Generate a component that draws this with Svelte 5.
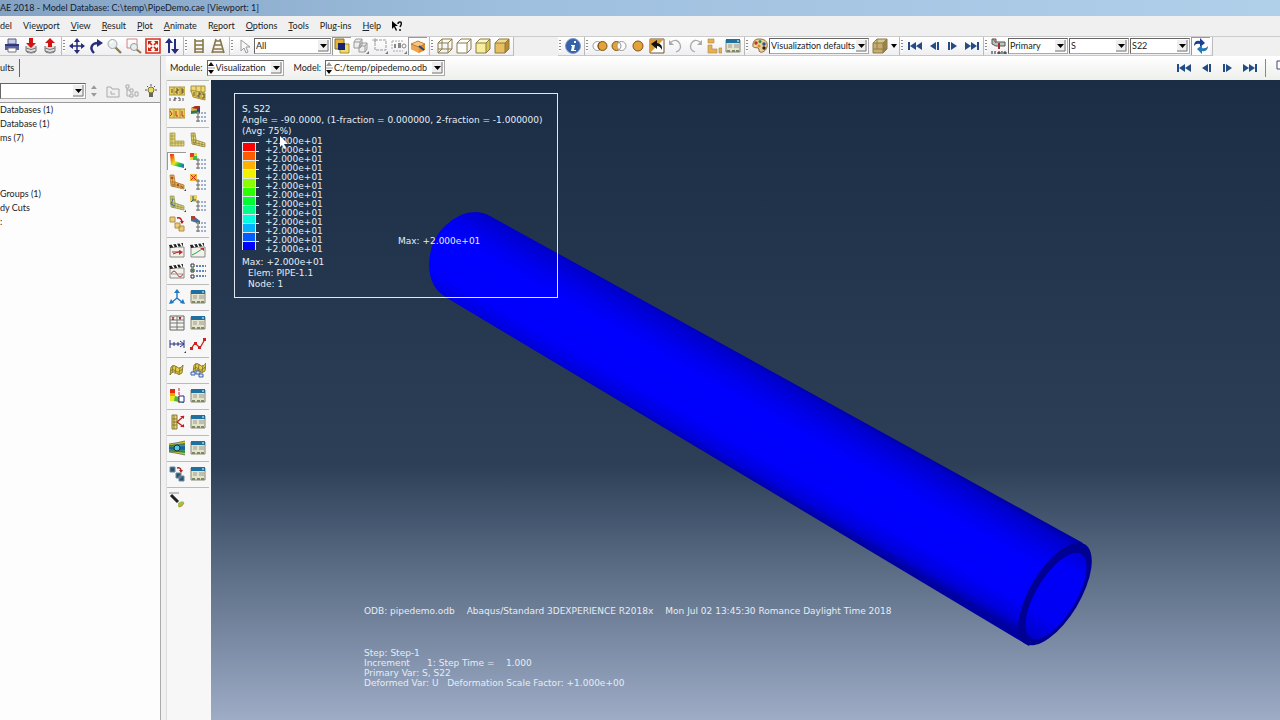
<script>
  const cube = (front, top, side) =>
    `<path d="M1 5h10v10H1z" fill="${front}"/><path d="M1 5l4-4h10l-4 4z" fill="${top}"/><path d="M11 5l4-4v10l-4 4z" fill="${side}"/><path d="M1 5h10v10H1zM1 5l4-4h10v10l-4 4M11 5l4-4" fill="none" stroke="#8a7a48"/>`;
  const table =
    '<path d="M1 2h14v12H1z" fill="#e6e3cc" stroke="#8a8872"/><path d="M1 1h14v4H1z" fill="#1f6f9f"/><path d="M2 12h3v2H2zM7 12h3v2H7zM11 12h3v2h-3z" fill="#7c8a68"/><path d="M3 7h4M9 7h5M3 9h4M9 9h5" stroke="#999"/><path d="M12 3h2" stroke="#fff"/>';
  const clap =
    '<path d="M1 5h14v10H1z" fill="#f2f2ec" stroke="#888"/><path d="M0 3l14-2v3L1 6z" fill="#222"/><path d="M3 2l2 3M7 1l2 4M11 1l2 3" stroke="#fff" stroke-width="1.4"/>';
  const list =
    '<path d="M7 6h2v2H7zM7 10h2v2H7zM7 14h2v2H7z" fill="#fff" stroke="#666"/><path d="M11 7h5M11 11h5M11 15h5" stroke="#456ca8" stroke-dasharray="2 1"/>';
  const elbow = (fill, line) =>
    `<path d="M1 1h4l1 7 9 3v4L2 12z" fill="${fill}"/><path d="M1 1h4l1 7 9 3v4L2 12zM3 1l1 12M1 4h4M1 8h5l-2 5M6 8v5M9 9v5M12 10v5M2 10l13 3" fill="none" stroke="${line}" stroke-width=".7"/>`;
  const rainbow =
    '<path d="M1 1h5v4H1z" fill="#e32a12"/><path d="M1 5h5v3H1z" fill="#f5a000"/><path d="M1 8h6v5H1z" fill="#e7e62a"/><path d="M6 8l4 1v5l-5-1z" fill="#3fc33a"/><path d="M10 9l5 1v5l-5-1z" fill="#169cc0"/>';
  const flag = '<path d="M2 5q3-3 6 0t6-2l-1 8q-3 3-6 0t-6 2z" fill="#e8cf4a" stroke="#8a7c34"/><path d="M7 4L6 12M1 9q3-3 6 0t6-2M4 3L3 11M11 5l-1 8" stroke="#8a7c34" fill="none"/>';

  const icons = {
    print: '<path d="M4 1h8v5H4z" fill="#c5ccec" stroke="#555a80"/><path d="M1 6h14v6H1z" fill="#5460a8"/><path d="M1 6h14v2H1z" fill="#33396f"/><path d="M4 10h8v4H4z" fill="#fff" stroke="#777"/>',
    save: '<ellipse cx="8" cy="13" rx="5" ry="2" fill="#ddd" stroke="#777"/><path d="M3 8v5q5 3 10 0V8" fill="#ddd" stroke="#777"/><path d="M3 10q5 3 10 0" fill="none" stroke="#777"/><path d="M6 0h4v5h3L8 10 3 5h3z" fill="#d51212"/>',
    load: '<ellipse cx="8" cy="13" rx="5" ry="2" fill="#ddd" stroke="#777"/><path d="M3 8v5q5 3 10 0V8" fill="#ddd" stroke="#777"/><path d="M3 10q5 3 10 0" fill="none" stroke="#777"/><path d="M6 9h4V5h3L8 0 3 5h3z" fill="#d51212"/>',
    pan: '<path d="M8 2v12M2 8h12" stroke="#252c7c" stroke-width="1.500"/><path d="M8 0l3 4H5zM8 16l3-4H5zM0 8l4-3v6zM16 8l-4-3v6z" fill="#252c7c"/>',
    rotate: '<path d="M6 15C1 10 4 5 10 5" fill="none" stroke="#252c7c" stroke-width="2.4"/><path d="M9 1l6 4-6 4z" fill="#252c7c"/>',
    zoom: '<path d="M8 9l6 6" stroke="#8f7c4a" stroke-width="2.4"/><circle cx="5.500" cy="6" r="4.500" fill="#e9eef0" stroke="#a2a8a8"/><path d="M3 5l3-2" stroke="#fff" stroke-width="2"/>',
    zoombox: '<path d="M1 1h10v9H1z" fill="none" stroke="#d78080"/><path d="M10 11l5 4" stroke="#8f7c4a" stroke-width="2.200"/><circle cx="8" cy="9" r="3.500" fill="#e9eef0" stroke="#999"/>',
    fit: '<path d="M1 1h14v14H1z" fill="#fff3ed" stroke="#dc3020" stroke-width="1.600"/><path d="M3 3h4L3 7zM13 3v4L9 3zM3 13V9l4 4zM13 13H9l4-4z" fill="#c92010"/><path d="M4 4l3 3M12 4L9 7M4 12l3-3M12 12L9 9" stroke="#c92010" stroke-width="1.600"/>',
    cycle: '<path d="M5 3v12M11 1v12" stroke="#252c7c" stroke-width="2"/><path d="M5 0l4 5H1zM11 16l4-5H7z" fill="#252c7c"/>',
    parallel: '<path d="M4 1v14M12 1v14M4 3h8M4 7h8M4 11h8M4 14h8" stroke="#877748" stroke-width="1.600"/>',
    perspective: '<path d="M6 1L2 15M10 1l4 14M5 3h6M5 7h6M4 11h9M2 14h12" stroke="#877748" stroke-width="1.600"/>',
    arrow: '<path d="M4 2v11l3-3 2 5 2-1-2-5h4z" fill="#f8f8f8" stroke="#999"/>',
    overlap: '<path d="M6 6h9v9H6z" fill="#f0dc70" stroke="#a8902c"/><path d="M1 1h9v10H1z" fill="#e0b53a" stroke="#8a6a20"/><path d="M4 5h7v7H4z" fill="#182375"/>',
    cubes: '<path d="M1 4h6v6H1zM1 4l2-3h6v6L7 10M7 4l2-3M6 8h6v6H6zM6 8l2-3h6v6l-2 3M12 8l2-3" fill="#eee" stroke="#999"/><path d="M16 13v3h-3z" fill="#777"/>',
    dashbox: '<path d="M3 2h11v10H3z" fill="none" stroke="#999" stroke-dasharray="3 1"/><path d="M0 2h5M3 0v5" stroke="#aaa"/><path d="M16 13v3h-3z" fill="#777"/>',
    shapes: '<path d="M1 3v9M1 3h12M2 13h10" fill="none" stroke="#aaa" stroke-dasharray="2 1"/><path d="M3 6h2v4H3zM7 5h3v5H7z" fill="#888"/><circle cx="13" cy="8" r="2" fill="none" stroke="#888"/><path d="M16 13v3h-3z" fill="#777"/>',
    box: '<path d="M1 6l7-3 7 3v6l-6 3-8-4z" fill="#e58c2b"/><path d="M1 6l8 3v6l-8-4z" fill="#f2a64c"/><path d="M1 6l7-3 7 3-6 3z" fill="#fac780" stroke="#9a5a18" stroke-width=".6"/><path d="M9 8l5 4" stroke="#234a80" stroke-width="2"/>',
    wire: cube('none', 'none', 'none') + '<path d="M5 1v10H1M5 11h10M5 11l-4 4" fill="none" stroke="#8b7d48"/>',
    hidden: cube('#fff', '#fff', '#f5f5ee'),
    filled: cube('#f6ee9c', '#fcf8c2', '#d8c453'),
    shaded: cube('#e8bf60', '#f4da85', '#b98b30'),
    info: '<circle cx="8" cy="8" r="7.500" fill="#3563a8" stroke="#7f9aca"/><path d="M9 3h2v2H9zM6 7h4l-1 5h2v1H6l1-5H6z" fill="#fff"/>',
    union: '<circle cx="5.500" cy="8" r="4.500" fill="#fff" stroke="#999"/><circle cx="10.500" cy="8" r="4.500" fill="#e5a238" stroke="#7a5418"/><path d="M8 4q-4 4 0 8" fill="none" stroke="#7a5418"/>',
    minus: '<circle cx="5.500" cy="8" r="4.500" fill="#e5a238" stroke="#7a5418"/><circle cx="10.500" cy="8" r="4.500" fill="#fff" stroke="#999"/><path d="M8 4q4 4 0 8" fill="none" stroke="#999"/>',
    disc: '<circle cx="8" cy="8" r="5" fill="#e5a238" stroke="#7a5418"/>',
    replace: '<path d="M1 1h14v14H1z" fill="#fff" stroke="#6d5732"/><path d="M1 1h14L1 15z" fill="#d99a35"/><path d="M2 6l6-4v3q6 1 5 7-2-4-5-4v3z" fill="#111"/>',
    undo: '<path d="M3 4q6-4 9 2 2 6-4 8" fill="none" stroke="#aaa" stroke-width="1.300"/><path d="M1 2v5h5z" fill="#aaa"/>',
    redo: '<path d="M13 4Q7 0 4 6q-2 6 4 8" fill="none" stroke="#aaa" stroke-width="1.300"/><path d="M15 2v5h-5z" fill="#aaa"/>',
    parts: '<path d="M2 1h6v4H2zM2 7h4v4h5v4H2zM13 10h3v5h-3z" fill="#e5b050" stroke="#a88848" stroke-width=".6"/>',
    table,
    palette: '<path d="M8 1c6 0 8 4 7 8s-5 6-7 5 0-3-2-4-6 1-5-4 4-5 7-5z" fill="#e8cf96" stroke="#8a6a3a"/><circle cx="4" cy="5" r="1.700" fill="#cf2c20"/><circle cx="8" cy="3.500" r="1.500" fill="#388a3a"/><circle cx="12" cy="6" r="1.700" fill="#2c4f9c"/><circle cx="12" cy="10" r="1.700" fill="#301818"/><circle cx="7" cy="8" r="1.500" fill="#db8a28"/>',
    tancube: cube('#c6ad6c', '#d8c68c', '#9c8448') + '<path d="M5 1v10H1M5 11h10" fill="none" stroke="#8f7d4c"/>',
    first: '<path d="M1 4h2v8H1zM9 4v8L3 8zM15 4v8L9 8z" fill="#234c86"/>',
    prev: '<path d="M10 4v8L4 8zM11 4h2v8h-2z" fill="#234c86"/>',
    next: '<path d="M6 4v8l6-4zM3 4h2v8H3z" fill="#234c86"/>',
    last: '<path d="M13 4h2v8h-2zM7 4v8l6-4zM1 4v8l6-4z" fill="#234c86"/>',
    field: '<path d="M1 1h4v3h9v4H5L1 6z" fill="#b4c8c0" stroke="#555"/><path d="M2 1l3 4" stroke="#c33"/><path d="M8 5v6" stroke="#b02828" stroke-width="2"/><path d="M1 13v3M4 13v3M7 14h2v2H7zM11 13v3M13 14h2v2h-2z" fill="none" stroke="#222"/>',
    sync: '<path d="M1 8Q1 2 7 3V0l5 5-5 4V6Q3 5 1 8z" fill="#1b3f92"/><path d="M15 8q0 6-6 5v3l-5-5 5-4v3q4 1 6-2z" fill="#2679b5"/>',
    folder: '<path d="M2 4h4l1 2h7v8H2z" fill="none" stroke="#aaa"/><path d="M6 11h4M6 11V8" stroke="#aaa"/>',
    tree: '<path d="M2 2h3v3H2zM6 6h3v3H6zM6 11h3v3H6zM11 9h3v4h-3zM3 5v8h3M3 7h3" fill="none" stroke="#aaa"/>',
    bulb: '<circle cx="8" cy="7" r="3" fill="#e5dc60" stroke="#76703a"/><path d="M6 10h4v4H6z" fill="#666"/><path d="M8 1v2M2 7h2M12 7h2M4 3l1 1M12 3l-1 1" stroke="#555"/>',
    nodes: '<path d="M0 2h16v8H0z" fill="#edd05a" stroke="#a8943f"/><path d="M5 2v8M11 2v8" stroke="#a8943f"/><path d="M3 4v4M7 4h2v2H7v2h2M12 4h2v4h-2M12 6h2M1 13v3M5 13h2v1H5v2h2M9 13h2v3H9M14 13v3" fill="none" stroke="#333" stroke-width=".8"/>',
    nodesdef: '<path d="M1 1h14v6H1z" fill="#f1d978" stroke="#a8943f"/><path d="M1 5l14 3v7L3 12z" fill="#edd05a" stroke="#a8943f"/><path d="M6 1v12M11 1v13" stroke="#a8943f"/><path d="M4 7v4M8 8h2v2H8v2h2M12 9h2v4h-2" fill="none" stroke="#333" stroke-width=".8"/>',
    symbols: '<path d="M0 3h16v9H0z" fill="#f0c85a" stroke="#a8943f"/><path d="M5 3v9M11 3v9" stroke="#a8943f"/><path d="M1 5l2 3-2 2M7 5v5h2M13 5v5h2" stroke="#ba3820" fill="none"/>',
    contourlist: '<path d="M1 2l4-2h5v3l-4 1z" fill="#b02c22"/><path d="M1 2v3l6 1V3z" fill="#d8b83a"/><path d="M1 5v3l8-1V4z" fill="#2f7a50"/><path d="M10 2l-3 1v5l3-1z" fill="#204c80"/>' + list,
    undeformed: '<path d="M1 1h5v8h9v5H1z" fill="#e7d777"/><path d="M1 1h5v8h9v5H1zM3 1v13M1 4h5M1 7h5M1 11h14M6 9v5M9 9v5M12 9v5" fill="none" stroke="#9a8c46" stroke-width=".7"/>',
    deformed: elbow('#e7d777', '#8a7c36'),
    contour: '<defs><linearGradient id="hue" x1="0" y1="0" x2="1" y2="1"><stop offset="0" stop-color="#e02010"/><stop offset=".3" stop-color="#f09a10"/><stop offset=".48" stop-color="#e8e82a"/><stop offset=".68" stop-color="#30c040"/><stop offset=".9" stop-color="#1878c8"/></linearGradient></defs><path d="M1 1h4l1 7 9 3v4L2 12z" fill="url(#hue)"/>',
    contouropts: '<path d="M0 0h7v7H0z" fill="#e8d93b"/><path d="M0 0h4v4H0z" fill="#e33c1b"/><path d="M3 3h4v4H3z" fill="#3cbf4a"/>' + list,
    symbolplot: elbow('#eeb45a', '#a5702c') + '<path d="M2 3l2 2M4 3L2 5M8 10l2 2M10 10l-2 2M12 12l2 2" stroke="#c04818"/>',
    symbolopts: '<path d="M0 0h7v7H0z" fill="#f0b23c"/><path d="M1 1l5 5M6 1L1 6" stroke="#cc3010"/>' + list,
    orient: elbow('#dcd17a', '#8c9050') + '<path d="M4 4l-2 5 4 2" fill="none" stroke="#2b74b0"/>',
    orientopts: '<path d="M0 0h7v7H0z" fill="#e8cf6a"/><path d="M3 1v4h3M3 5L1 7" stroke="#2b5f50" fill="none"/>' + list,
    multi: '<path d="M1 1h5v5H1zM6 7h5v5H6zM10 10h5v5h-5z" fill="#efca7a" stroke="#ae9048"/><path d="M8 2q5-1 5 5" fill="none" stroke="#b02020" stroke-width="1.500"/><path d="M11 5h4l-2 3z" fill="#b02020"/>',
    multiopts: '<path d="M1 1h4l5 4v3L1 5z" fill="#456f98"/><path d="M1 0h4v3H1z" fill="#ab4130"/>' + list,
    animtime: clap + '<path d="M3 10h8M4 12l8-3" stroke="#b03030"/><path d="M10 8l4 2-4 3z" fill="#c22"/>',
    animscale: clap + '<path d="M2 13l4-2 6-4" fill="none" stroke="#3a9a48"/><path d="M10 6h4v3z" fill="#c22"/>',
    animharm: clap + '<path d="M2 11q3-6 6 0t6 0" fill="none" stroke="#b03030"/><path d="M2 11h12" stroke="#999"/>',
    animopts: '<path d="M1 1h3v3H1zM1 6h3v3H1zM1 12h3v3H1z" fill="#fff" stroke="#333"/><path d="M2 7h1v1H2z" fill="#2a8040" stroke="#2a8040"/><path d="M6 3h10M6 8h10M6 13h10" stroke="#3560a8" stroke-width="1.500" stroke-dasharray="2 1"/>',
    triad: '<path d="M8 9V2M8 9l-6 5M8 9l6 5" stroke="#2378c0" stroke-width="1.400"/><path d="M8 0l3 4H5zM0 15l2-5 3 4zM16 15l-2-5-3 4z" fill="#2378c0"/>',
    xy: '<path d="M1 1h14v14H1z" fill="#f5f5f0" stroke="#666"/><path d="M1 5h14M1 8h14M1 12h14M8 1v14" stroke="#777"/><path d="M3 2l2 3M5 2L3 5M10 2l1 2 1-2M11 3v2" stroke="#b22"/>',
    path: '<path d="M1 4v8M15 4v8M1 8h13M5 6v4M9 6v4" stroke="#282f80"/><path d="M11 5l4 3-4 3" fill="none" stroke="#282f80"/>',
    plotxy: '<path d="M1 13l4-6 5 5 5-9" fill="none" stroke="#c22" stroke-width="1.300"/><path d="M0 11h3v3H0zM4 6h3v3H4zM8 10h3v3H8zM13 2h3v3h-3z" fill="#c22"/>',
    cut: flag,
    cutopts: '<g transform="translate(2 -2)">' + flag + '</g><path d="M1 10h4v3H1zM6 9h4v3H6zM9 12h4v3H9z" fill="#dce7fa" stroke="#3b62a8"/>',
    section: rainbow + '<path d="M10 0v16" stroke="#c22" stroke-dasharray="3 1"/><path d="M10 8h5v6h-5z" fill="#fff" stroke="#222a80"/>',
    freebody: '<path d="M3 1h5v14H3z" fill="#e7d777" stroke="#8a7c36"/><path d="M5 1v14M3 5h5M3 8h5M3 11h5" stroke="#8a7c36"/><path d="M8 8l7-6M8 8l7 5" stroke="#b22" stroke-width="1.300"/><path d="M11 2h4v3zM11 13h4v-3z" fill="#b22"/>',
    stream: '<path d="M0 4q8-1 16-3v14Q8 13 0 12z" fill="#d7c32a"/><path d="M0 5q8 0 16-2v10Q8 12 0 11z" fill="#3aa64a"/><path d="M0 7q8-1 16-1v4q-8 1-16-1z" fill="#2060a8"/><path d="M0 4q8-1 16-3M0 12q8 1 16 3M0 6q8-2 16-2M0 11q8 0 16 1" fill="none" stroke="#455" stroke-width=".7"/><circle cx="8" cy="8" r="3" fill="#59c7e0" stroke="#134"/>',
    layers: '<path d="M1 1h5v5H1zM7 7h5v5H7zM10 10h5v5h-5z" fill="#2c536e" stroke="#6a8aa0"/><path d="M8 2q4-1 4 3" fill="none" stroke="#b22" stroke-width="1.500"/><path d="M10 4h4l-2 3z" fill="#b22"/>',
    brush: '<path d="M0 1h10" stroke="#888"/><path d="M2 3l7 7" stroke="#222" stroke-width="3"/><path d="M9 11q4-3 6-1-1 5-6 5z" fill="#9ac44a"/><path d="M10 15q3 0 5-4" stroke="#d87a3a" fill="none"/>',
    windows: '<path d="M1 1h10v8H1z" fill="#fff" stroke="#447"/><path d="M5 6h10v8H5z" fill="#fff" stroke="#447"/>'
  };

  const menus = [
    ['', 'd', 'el'], ['Vie', 'w', 'port'], ['', 'V', 'iew'], ['', 'R', 'esult'], ['', 'P', 'lot'], ['', 'A', 'nimate'],
    ['R', 'e', 'port'], ['', 'O', 'ptions'], ['', 'T', 'ools'], ['Plu', 'g', '-ins'], ['', 'H', 'elp']
  ];
  const tools = [
    [['nodes', 'nodesdef'], ['symbols', 'contourlist']],
    [['undeformed', 'deformed'], ['contour', 'contouropts'], ['symbolplot', 'symbolopts'], ['orient', 'orientopts'], ['multi', 'multiopts']],
    [['animtime', 'animscale'], ['animharm', 'animopts']],
    [['triad', 'table']],
    [['xy', 'table'], ['path', 'plotxy']],
    [['cut', 'cutopts']],
    [['section', 'table']],
    [['freebody', 'table']],
    [['stream', 'table']],
    [['layers', 'table']],
    [['brush']]
  ];
  const flyouts = ['contour', 'symbolplot', 'orient', 'path'];
  const tree = ['Databases (1)', 'Database (1)', 'ms (7)', '', '', '', 'Groups (1)', 'dy Cuts', ':'];
  const bands = ['#ff0000', '#ff5c00', '#ffb000', '#f2f200', '#8bff00', '#2eff00', '#00ff2e', '#00ff8b', '#00ffe0', '#00b4ff', '#005cff', '#0000ff'];
  const levels = Array(13).fill('+2.000e+01');
</script>

{#snippet icon(name)}
  <svg class="icon" viewBox="0 0 16 16" aria-hidden="true">{@html icons[name]}</svg>
{/snippet}

{#snippet buttons(names, pressed = [])}
  {#each names as name}
    <button class="tool" class:pressed={pressed.includes(name)} aria-label={name}>{@render icon(name)}</button>
  {/each}
{/snippet}

{#snippet drop()}
  <svg class="drop" viewBox="0 0 11 12" aria-hidden="true"><path d="M0 0h11v12H0z" fill="#eee" /><path d="M10 0v11H0" fill="none" stroke="#777" /><path d="M2 4h7L5.500 8z" /></svg>
{/snippet}

{#snippet spin(off)}
  <svg class="spin" viewBox="0 0 7 14" aria-hidden="true"><path d="M0 5l3-4 3 4z" fill={off ? '#999' : '#111'} /><path d="M0 9l3 4 3-4z" /><path d="M0 7h7" stroke="#999" /></svg>
{/snippet}

{#snippet combo(label, value, size)}
  <span class="combo {size}">
    <select aria-label={label}><option>{value}</option></select>
    {@render drop()}
  </span>
{/snippet}

<div class="app">
  <header class="title">AE 2018 - Model Database: C:\temp\PipeDemo.cae [Viewport: 1]</header>

  <nav class="menu">
    {#each menus as [before, key, after], i}
      <button>{before}{#if i}<u>{key}</u>{:else}{key}{/if}{after}</button>
    {/each}
    <button class="whats" aria-label="help pointer"><svg viewBox="0 0 10 11"><path d="M0 0v8l2-2 2 4 1-1-2-4h3z" /><path d="M6 3q0-2 2-2t1 3L8 6M8 8v2" fill="none" stroke="#111" stroke-width="1.500" /></svg></button>
  </nav>

  <div class="toolbar">
    <div class="group first">{@render buttons(['print', 'save', 'load'])}</div>
    <div class="group grip">{@render buttons(['pan', 'rotate', 'zoom', 'zoombox', 'fit', 'cycle'])}</div>
    <div class="group grip">{@render buttons(['parallel', 'perspective'])}</div>
    <div class="group grip">
      {@render buttons(['arrow'])}
      {@render combo('Selection filter', 'All', 'mid')}
      {@render buttons(['overlap', 'cubes', 'dashbox', 'shapes', 'box'], ['overlap', 'box'])}
    </div>
    <div class="group grip">{@render buttons(['wire', 'hidden', 'filled', 'shaded'])}</div>
    <div class="gap"></div>
    <div class="group grip">{@render buttons(['info'])}</div>
    <div class="group grip">{@render buttons(['union', 'minus', 'disc', 'replace', 'undo', 'redo', 'parts', 'table'])}</div>
    <div class="group grip">
      {@render buttons(['palette'])}
      {@render combo('Color mapping', 'Visualization defaults', 'wide')}
      {@render buttons(['tancube'])}
      <button class="more" aria-label="more"><svg viewBox="0 0 7 4"><path d="M1 0h6L4 4z" /></svg></button>
    </div>
    <div class="group grip">{@render buttons(['first', 'prev', 'next', 'last'])}</div>
    <div class="group grip">
      {@render buttons(['field'])}
      {@render combo('Variable type', 'Primary', 'small')}
      {@render combo('Variable', 'S', 'small')}
      {@render combo('Component', 'S22', 'small')}
      {@render buttons(['sync'], ['sync'])}
    </div>
  </div>

  <div class="body">
    <aside class="side">
      <div class="tabs"><button class="tab">ults</button></div>
      <div class="filter">
        <span class="combo grow"><select aria-label="Result tree root"><option></option></select>{@render drop()}</span>
        <svg class="updown" viewBox="0 0 7 14"><path d="M0 5l3-4 3 4zM0 9l3 4 3-4z" fill="#999" /></svg>
        {@render buttons(['folder', 'tree', 'bulb'])}
      </div>
      <ul class="tree">
        {#each tree as item}<li>{item}</li>{/each}
      </ul>
    </aside>

    <section class="main">
      <div class="context">
        <label for="module">Module:</label>
        <span class="combo module">{@render spin(false)}<select id="module"><option>Visualization</option></select>{@render drop()}</span>
        <label for="model">Model:</label>
        <span class="combo model">{@render spin(true)}<select id="model"><option>C:/temp/pipedemo.odb</option></select>{@render drop()}</span>
        <div class="player">{@render buttons(['first', 'prev', 'next', 'last'])}</div>
        <div class="edge">{@render buttons(['windows'])}</div>
      </div>

      <div class="work">
        <div class="toolbox">
          {#each tools as rows}
            <div class="set">
              {#each rows as row}
                <div class="pair">
                  {#each row as name}
                    <button class="tool" class:pressed={name === 'contour'} class:fly={flyouts.includes(name)} aria-label={name}>{@render icon(name)}</button>
                  {/each}
                </div>
              {/each}
            </div>
          {/each}
        </div>

        <main class="viewport">
          <svg class="scene" viewBox="211 80 1069 640" role="img" aria-label="Pipe stress contour">
            <defs>
              <linearGradient id="skin" gradientUnits="userSpaceOnUse" x1="762" y1="362" x2="708" y2="458">
                <stop offset="0" stop-color="#0000a0" />
                <stop offset="0.070" stop-color="#0000cc" />
                <stop offset="0.250" stop-color="#0000ee" />
                <stop offset="0.400" stop-color="#0000ff" />
                <stop offset="0.750" stop-color="#0000fc" />
                <stop offset="0.900" stop-color="#0000dc" />
                <stop offset="1" stop-color="#0000a0" />
              </linearGradient>
              <linearGradient id="bore" x1="0" y1="0" x2="1" y2="0">
                <stop offset="0" stop-color="#0000c8" />
                <stop offset="0.250" stop-color="#0000f4" />
                <stop offset="0.800" stop-color="#0000fa" />
                <stop offset="1" stop-color="#0000d8" />
              </linearGradient>
            </defs>
            <path d="M490 216L1083 543L1029 646L447 298Q429 288 429 264Q430 239 446 225Q460 212 475 212Q483 212 490 216Z" fill="url(#skin)" />
            <ellipse cx="1055" cy="594" rx="58" ry="25" transform="rotate(-59 1055 594)" fill="#000092" />
            <ellipse cx="1056" cy="596" rx="49" ry="20" transform="rotate(-59 1056 596)" fill="url(#bore)" />
            <text x="398" y="244">Max: +2.000e+01</text>
          </svg>

          <div class="legend">
            <p>S, S22</p>
            <p>Angle = -90.0000, (1-fraction = 0.000000, 2-fraction = -1.000000)</p>
            <p>(Avg: 75%)</p>
            <div class="scale">
              <div class="bands">
                {#each bands as color}<i style="background:{color}"></i>{/each}
              </div>
              <div class="levels">
                {#each levels as level}<span>{level}</span>{/each}
              </div>
            </div>
            <p>Max: +2.000e+01</p>
            <p class="in">Elem: PIPE-1.1</p>
            <p class="in">Node: 1</p>
            <svg class="pointer" viewBox="0 0 10 14"><path d="M1 0v11l2-2 2 4 2-1-2-4h4z" fill="#fff" /></svg>
          </div>

          <div class="state">
            <p class="odb"><span>ODB: pipedemo.odb</span><span>Abaqus/Standard 3DEXPERIENCE R2018x</span><span>Mon Jul 02 13:45:30 Romance Daylight Time 2018</span></p>
            <p>Step: Step-1</p>
            <p>Increment      1: Step Time =    1.000</p>
            <p>Primary Var: S, S22</p>
            <p>Deformed Var: U   Deformation Scale Factor: +1.000e+00</p>
          </div>
        </main>
      </div>
    </section>
  </div>
</div>

<style>
  :global(body) { margin: 0; overflow: hidden; }
  .app {
    height: 100vh;
    display: flex;
    flex-direction: column;
    overflow: hidden;
    background: #f0f0f0;
    color: #222;
    font: 9px/14px Lato, "Open Sans", sans-serif;
  }
  button { border: 0; padding: 0; background: none; font: inherit; color: inherit; display: flex; align-items: center; justify-content: center; }
  p { margin: 0; white-space: pre; }
  svg { display: block; }

  .title { height: 16px; line-height: 16px; flex: none; white-space: nowrap; color: #14202e; background: linear-gradient(90deg, #84a3c4, #9fbfdf 40%, #b0cfe9); }
  .menu { height: 20px; flex: none; display: flex; align-items: center; gap: 11px; }
  .menu button { display: block; line-height: 20px; }
  .menu u { text-underline-offset: 1px; }
  .whats svg { width: 10px; height: 11px; }

  .toolbar { height: 20px; box-sizing: border-box; flex: none; display: flex; border-top: 1px solid #ccc; white-space: nowrap; }
  .group { display: flex; align-items: center; flex: none; padding-right: 2px; border-right: 1px solid #bbb; border-bottom: 1px solid #c8c8c8; background: linear-gradient(#fff, #efeff2); }
  .first { padding-left: 2px; }
  .grip::before { content: ""; width: 2px; height: 12px; margin: 0 2px 0 1px; background: repeating-linear-gradient(#888 0 1px, #fff 1px 3px); }
  .gap { width: 44px; }
  .tool { width: 19px; height: 18px; flex: none; position: relative; }
  .tool.pressed { background: #fdfdfd; box-shadow: inset 1px 1px #999; }
  .icon { width: 16px; height: 16px; }
  .more { width: 8px; height: 18px; }
  .more svg { width: 7px; height: 4px; }

  .combo { display: flex; align-items: center; box-sizing: border-box; height: 16px; margin-right: 1px; padding-right: 1px; background: #fff; border: 1px solid #aaa; border-top-color: #666; border-left-color: #666; }
  .combo select { appearance: none; flex: 1; min-width: 0; width: 0; height: 14px; padding: 0 0 0 1px; border: 0; background: none; font: inherit; line-height: 14px; color: #222; }
  .drop { width: 11px; height: 12px; flex: none; }
  .spin { width: 7px; height: 14px; flex: none; }
  .mid { width: 77px; }
  .wide { width: 100px; }
  .small { width: 60px; }

  .body { flex: 1; min-height: 0; display: flex; }
  .side { width: 160px; flex: none; display: flex; flex-direction: column; border-right: 1px solid #aaa; }
  .tabs { height: 24px; display: flex; align-items: center; }
  .tab { padding-right: 5px; border-right: 1px solid #666; height: 18px; }
  .filter { height: 22px; display: flex; align-items: center; }
  .grow { width: 88px; margin: 0; }
  .updown { width: 7px; height: 14px; margin: 0 5px; }
  .tree { flex: 1; margin: 0; padding: 0; list-style: none; background: #fdfdfe; border-top: 1px solid #999; }
  .tree li { height: 14px; white-space: nowrap; }

  .main { flex: 1; min-width: 0; display: flex; flex-direction: column; padding-left: 5px; }
  .context { height: 24px; flex: none; display: flex; align-items: center; white-space: nowrap; background: linear-gradient(#fff, #eef0ec); }
  .context label { padding: 0 4px; }
  .module { width: 77px; margin-right: 6px; }
  .model { width: 120px; }
  .player { margin-left: auto; display: flex; gap: 3px; padding-right: 6px; border-right: 1px solid #888; }
  .edge { width: 14px; overflow: hidden; padding-left: 8px; box-sizing: border-box; }

  .work { flex: 1; min-height: 0; display: flex; }
  .toolbox { width: 45px; flex: none; background: #f7f7f7; border-left: 1px solid #ddd; box-sizing: border-box; }
  .set { margin-right: 2px; padding: 2px 0; border-top: 1px solid #bbb; }
  .pair { display: flex; gap: 2px; padding: 1px 0; height: 19px; }
  .fly::after { content: ""; position: absolute; right: 0; bottom: 0; border: 1px solid #333; border-top-color: transparent; border-left-color: transparent; }

  .viewport {
    flex: 1;
    min-width: 0;
    position: relative;
    overflow: hidden;
    color: #e4edf5;
    font: 9px/11px "DejaVu Sans", Verdana, sans-serif;
    background: linear-gradient(#1b2d45, #2c3f57 60%, #9eacc6);
  }
  .scene { position: absolute; inset: 0; width: 100%; height: 100%; }
  .scene text { fill: #e4edf5; }
  .legend { position: absolute; left: 23px; top: 13px; width: 315px; padding: 10px 0 7px 7px; border: 1px solid #dfe8f0; }
  .scale { display: flex; gap: 9px; margin-bottom: 3px; }
  .bands { width: 14px; margin-top: 5px; height: 108px; display: grid; grid-auto-rows: 9px; border-left: 1px solid #dfe8f0; border-bottom: 1px solid #dfe8f0; box-sizing: border-box; }
  .bands i { position: relative; border-top: 1px solid #dfe8f0; border-right: 1px solid #dfe8f0; }
  .bands i::after { content: ""; position: absolute; top: -1px; left: 100%; width: 4px; height: 1px; background: #dfe8f0; }
  .levels span { display: block; line-height: 9px; }
  .in { padding-left: 6px; }
  .pointer { position: absolute; left: 44px; top: 42px; width: 10px; height: 14px; }
  .state { position: absolute; left: 153px; bottom: 32px; line-height: 10px; }
  .odb { display: flex; gap: 12px; margin-bottom: 32px; }
</style>
